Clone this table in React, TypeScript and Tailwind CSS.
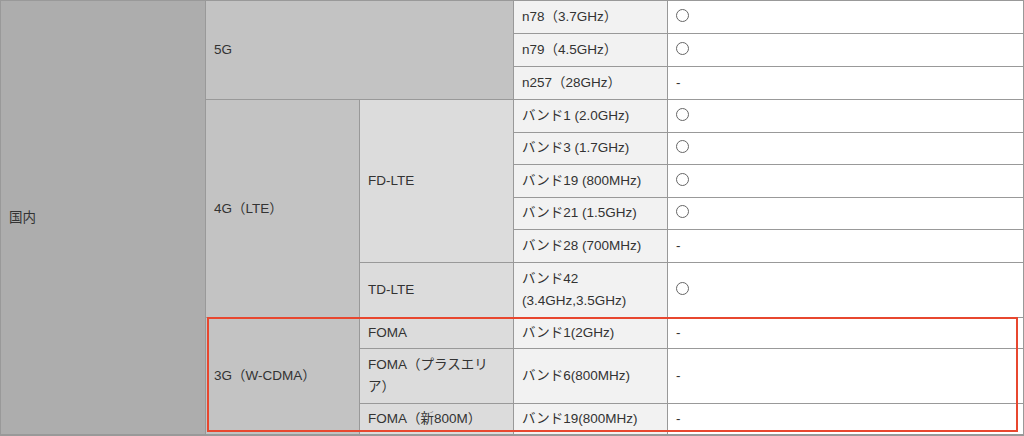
const rows5g = [
  { band: 'n78（3.7GHz）', ok: '〇' },
  { band: 'n79（4.5GHz）', ok: '〇' },
  { band: 'n257（28GHz）', ok: '-' },
];

const fdLte = [
  { band: 'バンド1 (2.0GHz)', ok: '〇' },
  { band: 'バンド3 (1.7GHz)', ok: '〇' },
  { band: 'バンド19 (800MHz)', ok: '〇' },
  { band: 'バンド21 (1.5GHz)', ok: '〇' },
  { band: 'バンド28 (700MHz)', ok: '-' },
];

const cell = 'border border-[#999] px-2 align-middle leading-[22px]';
const c1 = `${cell} bg-[#adadad]`;
const c2 = `${cell} bg-[#c3c3c3]`;
const c3 = `${cell} bg-[#dcdcdc]`;
const c4 = `${cell} bg-[#f2f2f2]`;
const c5 = `${cell} bg-white`;

const Mark = ({ v }: { v: string }) =>
  v === '〇' ? (
    <span className="inline-block w-[13px] h-[13px] rounded-full border border-[#666] align-[-1px]" />
  ) : (
    <span>-</span>
  );

export default function App() {
  return (
    <div className="w-[1024px] h-[436px] overflow-hidden bg-white border-b-2 border-[#999]">
      <div className="relative">
        <table
          className="w-[1024px] table-fixed border-collapse text-[13.5px] text-[#333]"
          style={{ fontFamily: '"Liberation Sans", "Noto Sans CJK JP", sans-serif' }}
        >
          <colgroup>
            <col className="w-[205px]" />
            <col className="w-[154px]" />
            <col className="w-[154px]" />
            <col className="w-[154px]" />
            <col />
          </colgroup>
          <tbody>
            {rows5g.map((r, i) => (
              <tr key={r.band} className="h-[33px]">
                {i === 0 && (
                  <td rowSpan={14} className={c1}>
                    国内
                  </td>
                )}
                {i === 0 && (
                  <td rowSpan={3} colSpan={2} className={c2}>
                    5G
                  </td>
                )}
                <td className={c4}>{r.band}</td>
                <td className={c5}>
                  <Mark v={r.ok} />
                </td>
              </tr>
            ))}
            {fdLte.map((r, i) => (
              <tr key={r.band} className={i === 4 ? 'h-[33px]' : 'h-[32.5px]'}>
                {i === 0 && (
                  <td rowSpan={6} className={c2}>
                    4G（LTE）
                  </td>
                )}
                {i === 0 && (
                  <td rowSpan={5} className={c3}>
                    FD-LTE
                  </td>
                )}
                <td className={c4}>{r.band}</td>
                <td className={c5}>
                  <Mark v={r.ok} />
                </td>
              </tr>
            ))}
            <tr className="h-[55px]">
              <td className={c3}>TD-LTE</td>
              <td className={c4}>
                バンド42
                <br />
                (3.4GHz,3.5GHz)
              </td>
              <td className={c5}>
                <Mark v="〇" />
              </td>
            </tr>
            <tr className="h-[31px]">
              <td rowSpan={3} className={c2}>
                3G（W-CDMA）
              </td>
              <td className={c3}>FOMA</td>
              <td className={c4}>バンド1(2GHz)</td>
              <td className={c5}>-</td>
            </tr>
            <tr className="h-[55px]">
              <td className={c3}>
                FOMA（プラスエリ
                <br />
                ア）
              </td>
              <td className={c4}>バンド6(800MHz)</td>
              <td className={c5}>-</td>
            </tr>
            <tr className="h-[31px]">
              <td className={c3}>FOMA（新800M）</td>
              <td className={c4}>バンド19(800MHz)</td>
              <td className={c5}>-</td>
            </tr>
          </tbody>
        </table>
        <div className="absolute left-[207px] top-[317px] w-[811px] h-[115px] border-2 border-[#e8472f] pointer-events-none" />
      </div>
    </div>
  );
}
